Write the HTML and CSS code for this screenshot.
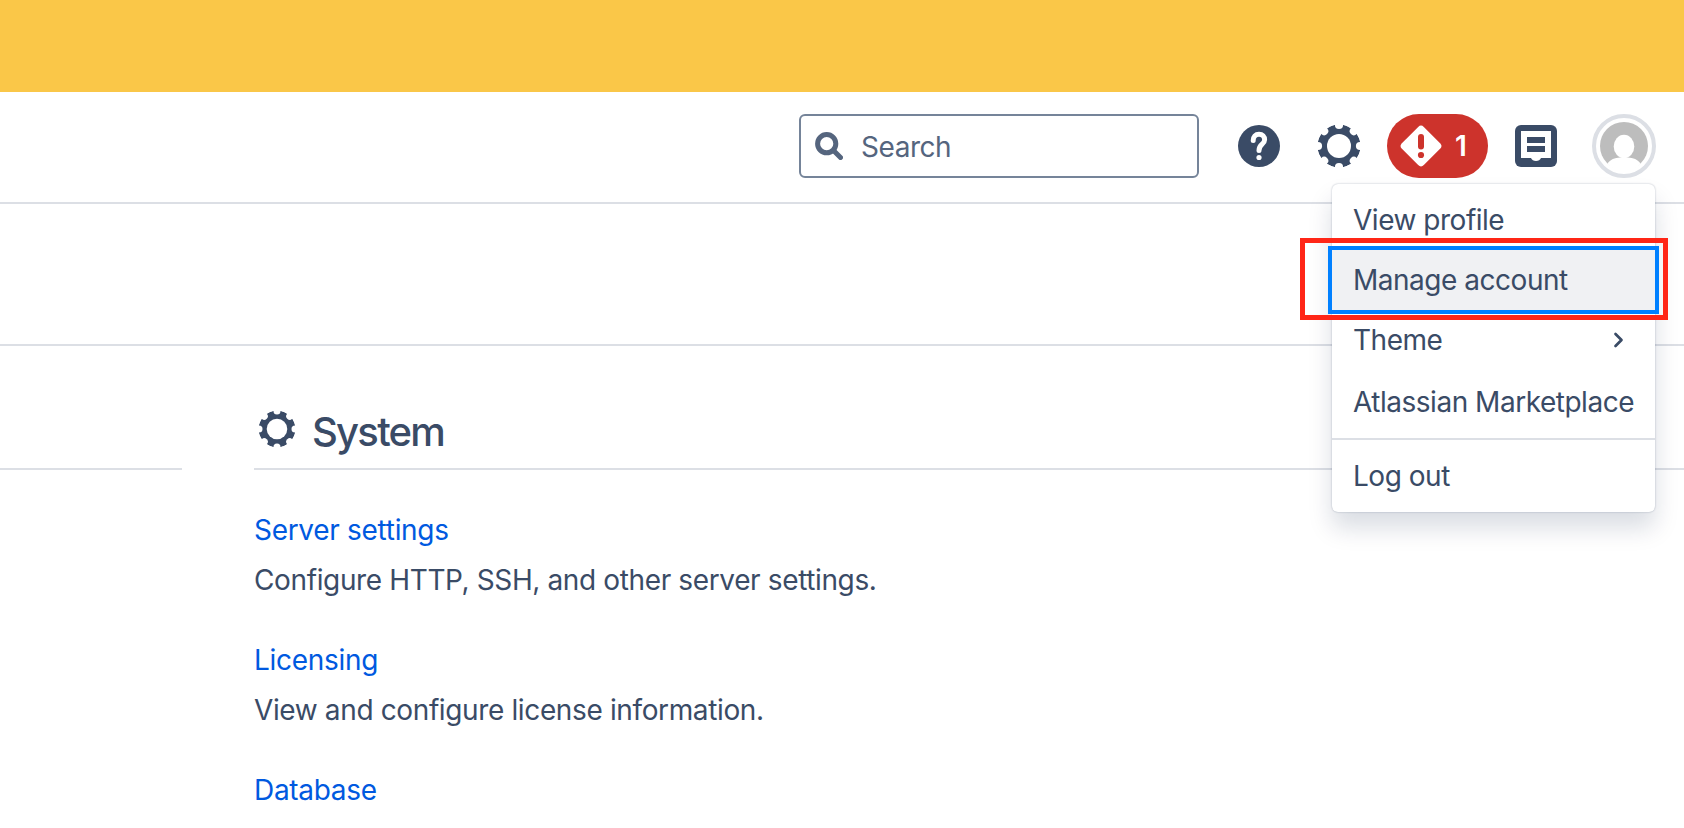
FILE: index.html
```
<!DOCTYPE html>
<html lang="en">
<head>
    <meta charset="UTF-8">
    <meta name="viewport" content="width=device-width, initial-scale=1.0">
    <title>Administration</title>
    <link rel="stylesheet" href="styles.css">
</head>
<body>
    <svg class="defs" width="0" height="0">
        <symbol id="gear" viewBox="-21 -21 42 42">
            <mask id="notches">
                <circle r="21.5" fill="white"/>
                <circle r="12" fill="black"/>
                <g fill="black">
                    <circle cy="-21" r="4.1"/>
                    <circle cy="-21" r="4.1" transform="rotate(45)"/>
                    <circle cy="-21" r="4.1" transform="rotate(90)"/>
                    <circle cy="-21" r="4.1" transform="rotate(135)"/>
                    <circle cy="-21" r="4.1" transform="rotate(180)"/>
                    <circle cy="-21" r="4.1" transform="rotate(225)"/>
                    <circle cy="-21" r="4.1" transform="rotate(270)"/>
                    <circle cy="-21" r="4.1" transform="rotate(315)"/>
                </g>
            </mask>
            <circle r="21.5" fill="currentColor" mask="url(#notches)"/>
        </symbol>
    </svg>
    <div class="banner"></div>
    <header class="header">
        <div class="search">
            <svg width="28" height="28" viewBox="0 0 28 28" fill="none" stroke="currentColor">
                <circle cx="11.7" cy="11.7" r="9.1" stroke-width="5"/>
                <path d="M19 19l6.5 6.5" stroke-width="5" stroke-linecap="round"/>
            </svg>
            <span class="placeholder">Search</span>
        </div>
        <svg class="help" width="42" height="42" viewBox="0 0 42 42">
            <circle cx="21" cy="21" r="21" fill="currentColor"/>
            <path d="M15.2 15.5C15.2 11.5 17.5 9.3 21 9.3S26.6 11.5 26.6 14.8C26.6 19.5 21 19 21 25.5" fill="none" stroke="white" stroke-width="5" stroke-linecap="round"/>
            <circle cx="21" cy="32.5" r="2.6" fill="white"/>
        </svg>
        <svg class="settings" width="42" height="42"><use href="#gear"/></svg>
        <div class="alerts">
            <svg width="42" height="42" viewBox="0 0 42 42">
                <rect x="5.5" y="5.5" width="31" height="31" rx="4" fill="white" transform="rotate(45 21 21)"/>
                <path d="M21 12v9.5" stroke="#cd332c" stroke-width="6" stroke-linecap="round"/>
                <circle cx="21" cy="30" r="3.1" fill="#cd332c"/>
            </svg>
            <span class="count">1</span>
        </div>
        <svg class="inbox" width="42" height="42" viewBox="0 0 42 42">
            <rect width="42" height="42" rx="6" fill="currentColor"/>
            <path d="M6 6h30v27H26c-.8 2-2.6 3-5 3s-4.2-1-5-3H6z" fill="white"/>
            <path d="M12 12h18v6H12zM12 21h18v6H12z" fill="currentColor"/>
        </svg>
        <div class="avatar">
            <svg width="48" height="48" viewBox="0 0 48 48">
                <circle cx="24" cy="24" r="24" fill="#bdbdbd"/>
                <ellipse cx="24" cy="24.5" rx="10.3" ry="11.8" fill="white"/>
                <path d="M7.5 42C10 37 15 36 20 35.5h8c5 .5 10 1.5 12.5 6.5Q34 49 24 49T7.5 42z" fill="white"/>
            </svg>
        </div>
        <nav class="menu">
            <a class="item">View profile</a>
            <a class="item manage">Manage account</a>
            <a class="item theme">Theme
                <svg width="12" height="18" viewBox="0 0 12 18" fill="none" stroke="currentColor" stroke-width="2.7" stroke-linecap="round" stroke-linejoin="round"><path d="M2.5 3l6 6-6 6"/></svg>
            </a>
            <a class="item">Atlassian Marketplace</a>
            <hr>
            <a class="item">Log out</a>
            <div class="highlight"></div>
        </nav>
    </header>
    <div class="title-bar"></div>
    <main class="columns">
        <section class="previous"></section>
        <section class="system">
            <h2><svg width="36" height="36"><use href="#gear"/></svg><span>System</span></h2>
            <dl>
                <dt><a>Server settings</a></dt>
                <dd>Configure HTTP, SSH, and other server settings.</dd>
                <dt><a>Licensing</a></dt>
                <dd>View and configure license information.</dd>
                <dt><a>Database</a></dt>
            </dl>
        </section>
    </main>
</body>
</html>
```
FILE: styles.css
```
*{
    margin: 0;
    padding: 0;
    box-sizing: border-box;
}
body{
    height: 828px;
    overflow: hidden;
    background: #fff;
    color: #3a4b66;
    font-family: Inter, "Liberation Sans", sans-serif;
    font-size: 28px;
    letter-spacing: -0.37px;
}
svg{
    display: block;
    flex-shrink: 0;
}
.defs{
    position: absolute;
}
.banner{
    height: 92px;
    background: #fac748;
}
.header{
    position: relative;
    display: flex;
    align-items: center;
    justify-content: flex-end;
    height: 112px;
    padding: 0 28px 2px 0;
    border-bottom: 2px solid #dcdfe5;
}
.search{
    display: flex;
    align-items: center;
    gap: 18px;
    width: 400px;
    height: 64px;
    padding-left: 14px;
    margin-right: 39px;
    border: 2px solid #758499;
    border-radius: 6px;
    color: #55657e;
}
.placeholder{
    padding-top: 2px;
    letter-spacing: -0.45px;
}
.help{
    margin-right: 38px;
}
.settings{
    margin-right: 27px;
}
.alerts{
    display: flex;
    align-items: center;
    width: 101px;
    height: 64px;
    padding-left: 13px;
    margin-right: 27px;
    border-radius: 32px;
    background: #cd332c;
    color: #fff;
}
.count{
    margin-left: 13px;
    font-weight: 600;
}
.inbox{
    margin-right: 35px;
}
.avatar{
    width: 64px;
    height: 64px;
    padding: 4px;
    border: 4px solid #dcdfe5;
    border-radius: 50%;
}
.menu{
    position: absolute;
    top: 92px;
    right: 29px;
    width: 323px;
    height: 328px;
    padding: 6px 0;
    border-radius: 6px;
    background: #fff;
    box-shadow: 0 0 2px rgba(9, 30, 66, 0.31), 0 16px 24px rgba(9, 30, 66, 0.15);
    letter-spacing: -0.48px;
}
.item{
    display: flex;
    align-items: center;
    justify-content: space-between;
    height: 60px;
    padding: 0 30px 0 21px;
    line-height: 60px;
    white-space: nowrap;
}
.manage{
    background: #f0f1f3;
    outline: 4px solid #0080ff;
}
.theme{
    margin-bottom: 2px;
}
.menu hr{
    height: 2px;
    margin: 6px 0;
    border: none;
    background: #dcdfe5;
}
.highlight{
    position: absolute;
    top: 54px;
    left: -32px;
    width: 368px;
    height: 82px;
    border: 5px solid #ff2617;
}
.title-bar{
    height: 142px;
    border-bottom: 2px solid #dcdfe5;
}
.columns{
    display: grid;
    grid-template-columns: 182px 1fr;
    gap: 72px;
}
.previous{
    height: 124px;
    border-bottom: 2px solid #dcdfe5;
}
h2{
    display: flex;
    align-items: center;
    gap: 17px;
    height: 124px;
    padding: 44px 0 0 5px;
    border-bottom: 2px solid #dcdfe5;
    font-size: 40px;
    font-weight: 550;
    letter-spacing: -1.75px;
}
h2 span{
    padding-top: 4px;
}
dl{
    padding-top: 38px;
    line-height: 40px;
}
dt{
    height: 50px;
    padding-top: 2px;
    color: #0059e0;
    letter-spacing: -0.3px;
}
dd{
    height: 50px;
    margin-bottom: 30px;
    padding-top: 2px;
}
```
